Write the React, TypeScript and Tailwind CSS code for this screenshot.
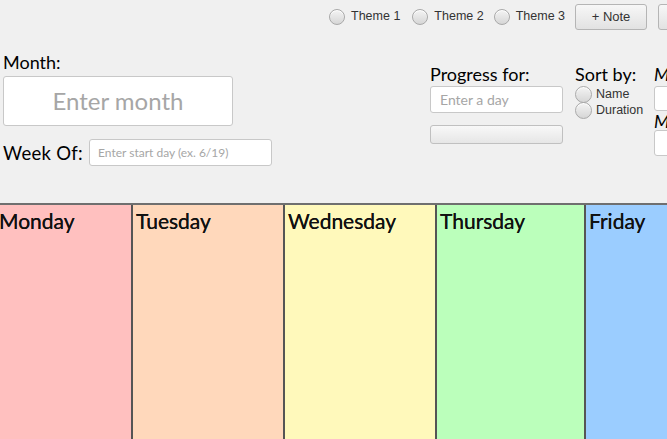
import React from "react";

const futura = { fontFamily: "Lato, 'Noto Sans', sans-serif" } as React.CSSProperties;
const sys = { fontFamily: "'Liberation Sans', Arial, sans-serif" } as React.CSSProperties;

function Radio({ size = 16 }: { size?: number }) {
  return (
    <span
      className="inline-block shrink-0 rounded-full border border-[#a9a9a9] bg-gradient-to-b from-[#f4f4f4] to-[#d6d6d6] shadow-[inset_0_1px_0_#fff]"
      style={{ width: size, height: size }}
    />
  );
}

export default function App() {
  const days = [
    { name: "Monday", bg: "bg-[#ffc0bf]", w: "w-[131px]", pad: "pl-0" },
    { name: "Tuesday", bg: "bg-[#ffd8bb]", w: "w-[152px]", pad: "pl-[3px]" },
    { name: "Wednesday", bg: "bg-[#fff9bb]", w: "w-[152px]", pad: "pl-[3px]" },
    { name: "Thursday", bg: "bg-[#bbffbb]", w: "w-[149px]", pad: "pl-[3px]" },
    { name: "Friday", bg: "bg-[#9bcdff]", w: "w-[100px]", pad: "pl-[3px]" },
  ];
  return (
    <div className="w-[667px] h-[439px] overflow-hidden bg-[#f0f0f0] flex flex-col">
      {/* top bar */}
      <div className="h-[33px] flex items-center pl-[329px] whitespace-nowrap text-[12.5px] text-[#333]" style={sys}>
        <Radio />
        <span className="ml-[6px]">Theme 1</span>
        <span className="ml-[12px] flex items-center"><Radio /></span>
        <span className="ml-[6px]">Theme 2</span>
        <span className="ml-[10px] flex items-center"><Radio /></span>
        <span className="ml-[6px]">Theme 3</span>
        <button className="ml-[10px] w-[72px] h-[26px] shrink-0 rounded-[3px] border border-[#b5b5b5] bg-gradient-to-b from-[#f7f7f7] to-[#e2e2e2] text-[13px] text-[#333]">+ Note</button>
        <button className="ml-[11px] w-[72px] h-[26px] shrink-0 rounded-[3px] border border-[#b5b5b5] bg-gradient-to-b from-[#f7f7f7] to-[#e2e2e2]"></button>
      </div>

      {/* form area */}
      <div className="h-[170px] flex whitespace-nowrap" style={futura}>
        {/* left */}
        <div className="w-[427px] pl-[3px] pt-[17px] shrink-0">
          <div className="text-[18px] leading-[24px] text-black">Month:</div>
          <div className="mt-[2px] w-[230px] h-[50px] rounded-[3px] border border-[#c8c8c8] bg-white flex items-center justify-center text-[24px] text-[#a6a6a6]">Enter month</div>
          <div className="mt-[13px] flex items-center">
            <span className="text-[18.5px] leading-[24px] text-black tracking-[0.3px]">Week Of:</span>
            <div className="ml-[6px] w-[183px] h-[27px] rounded-[3px] border border-[#c8c8c8] bg-white flex items-center pl-[8px] text-[12px] text-[#a6a6a6]">Enter start day (ex. 6/19)</div>
          </div>
        </div>
        {/* progress */}
        <div className="w-[145px] pl-[3px] pt-[29px] shrink-0">
          <div className="text-[18px] leading-[24px] text-black">Progress for:</div>
          <div className="w-[133px] h-[27px] rounded-[3px] border border-[#c8c8c8] bg-white flex items-center pl-[9px] text-[14px] text-[#a6a6a6]">Enter a day</div>
          <div className="mt-[12px] w-[133px] h-[19px] rounded-[3px] border border-[#c0c0c0] bg-gradient-to-b from-[#f8f8f8] to-[#e6e6e6]"></div>
        </div>
        {/* sort */}
        <div className="w-[82px] pl-[3px] pt-[29px] shrink-0">
          <div className="text-[18px] leading-[24px] text-black">Sort by:</div>
          <div className="flex items-center h-[15px] mt-[1px]">
            <Radio size={17} />
            <span className="ml-[4px] text-[12.5px] text-[#333]" style={sys}>Name</span>
          </div>
          <div className="flex items-center h-[17px]">
            <Radio size={17} />
            <span className="ml-[4px] text-[12.5px] text-[#333]" style={sys}>Duration</span>
          </div>
        </div>
        {/* right cut */}
        <div className="pt-[29px] shrink-0">
          <div className="text-[18px] leading-[24px] text-black italic">M</div>
          <div className="w-[60px] h-[25px] rounded-[3px] border border-[#c8c8c8] bg-white"></div>
          <div className="text-[18px] leading-[18px] text-black italic mt-[1px]">M</div>
          <div className="w-[60px] h-[26px] rounded-[3px] border border-[#c8c8c8] bg-white"></div>
        </div>
      </div>

      {/* calendar */}
      <div className="flex-1 flex border-t-[2px] border-[#6f6f6f]" style={futura}>
        {days.map((d, i) => (
          <div
            key={d.name}
            className={`${d.bg} ${d.w} shrink-0 ${i > 0 ? "border-l-[2px] border-[#555]" : ""}`}
          >
            <div className={`${d.pad} pt-[3px] text-[21px] leading-[26px] text-[#111] [text-shadow:0_0_0.3px_#111] ${i === 0 ? "-ml-[1px]" : ""}`}>{d.name}</div>
          </div>
        ))}
      </div>
    </div>
  );
}
